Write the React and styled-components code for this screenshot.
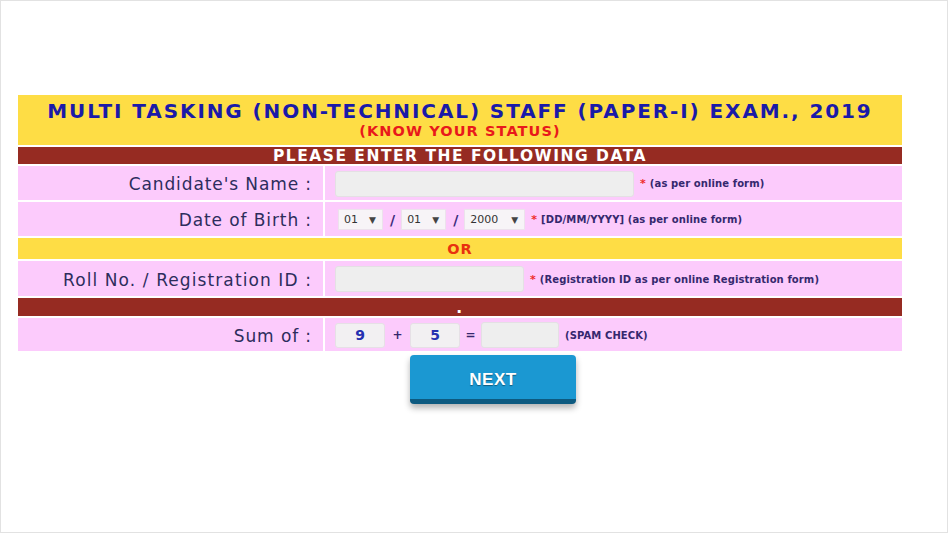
import React from "react";
import styled, { createGlobalStyle } from "styled-components";

const Global = createGlobalStyle`
  html, body {
    margin: 0;
    padding: 0;
    background: #ffffff;
  }
  * {
    box-sizing: border-box;
  }
`;

const Frame = styled.div`
  width: 948px;
  height: 533px;
  border: 1px solid #e2e2e2;
  padding: 94px 0 0 17px;
  font-family: "DejaVu Sans", Verdana, sans-serif;
`;

const Form = styled.div`
  width: 884px;
  display: flex;
  flex-direction: column;
  gap: 2px;
`;

const Header = styled.div`
  height: 50px;
  background: #fedd45;
  display: flex;
  flex-direction: column;
  align-items: center;
  padding-top: 4px;
`;

const Title = styled.div`
  color: #1a1aa8;
  font-weight: bold;
  font-size: 20px;
  line-height: 24px;
  letter-spacing: 1.9px;
`;

const SubTitle = styled.div`
  color: #e8191b;
  font-weight: bold;
  font-size: 14.5px;
  line-height: 16px;
  letter-spacing: 1.1px;
`;

const Band = styled.div`
  height: ${(p) => p.h}px;
  background: ${(p) => (p.yellow ? "#fedd45" : "#962b22")};
  color: ${(p) => (p.yellow ? "#e8310f" : "#ffffff")};
  font-weight: bold;
  font-size: ${(p) => (p.yellow ? "14.5px" : "15.5px")};
  display: flex;
  align-items: center;
  justify-content: center;
  padding-top: 1px;
  letter-spacing: ${(p) => (p.yellow ? "1px" : "1.5px")};
`;

const Row = styled.div`
  height: ${(p) => p.h}px;
  display: grid;
  grid-template-columns: 305px 1fr;
  gap: 2px;
`;

const Label = styled.div`
  background: #fccbfc;
  color: #2d2d5c;
  font-size: 17px;
  letter-spacing: ${(p) => (p.wide ? "1.1px" : "0.9px")};
  display: flex;
  align-items: center;
  justify-content: flex-end;
  padding: 2px 11px 0 0;
`;

const Value = styled.div`
  background: #fccbfc;
  display: flex;
  align-items: center;
  padding: 1px 0 0 10px;
`;

const TextBox = styled.div`
  width: ${(p) => p.w}px;
  height: 26px;
  background: #eeeeee;
  border: 1px solid #e4e0e4;
  border-radius: 3px;
`;

const Note = styled.span`
  color: #35286e;
  font-size: 10px;
  font-weight: bold;
  letter-spacing: 0.1px;
  margin-left: 6px;
  white-space: nowrap;
  b {
    color: #ef2b2b;
    font-size: 11px;
    margin-right: 4px;
  }
`;

const Select = styled.div`
  width: ${(p) => p.w}px;
  height: 21px;
  background: #f7f4f7;
  border: 1px solid #ece2ec;
  color: #333;
  font-size: 11px;
  display: flex;
  align-items: center;
  justify-content: space-between;
  padding: 0 6px 0 5px;
  margin-left: 3px;
  span {
    font-size: 9px;
    color: #444;
  }
`;

const Slash = styled.span`
  color: #3a2a7a;
  font-weight: bold;
  font-size: 14px;
  margin: 0 3px 0 7px;
`;

const NumBox = styled.div`
  width: 50px;
  height: 25px;
  background: #f2f0f2;
  border: 1px solid #e6e0e6;
  border-radius: 3px;
  color: #2530b0;
  font-weight: bold;
  font-size: 14px;
  display: flex;
  align-items: center;
  justify-content: center;
`;

const Op = styled.span`
  color: #35286e;
  font-weight: bold;
  font-size: 12px;
  width: ${(p) => p.w}px;
  text-align: center;
`;

const Footer = styled.div`
  width: 884px;
  display: flex;
  justify-content: center;
  padding: 4px 0 0 66px;
`;

const NextButton = styled.button`
  width: 166px;
  height: 49px;
  background: #1b98d2;
  border: none;
  border-bottom: 5px solid #0d5a80;
  border-radius: 4px;
  box-shadow: 0 4px 6px rgba(0, 0, 0, 0.3);
  color: #ffffff;
  font-family: "Liberation Sans", Arial, sans-serif;
  font-weight: bold;
  font-size: 17px;
  letter-spacing: 0.5px;
  text-shadow: 0 1px 1px rgba(0, 0, 0, 0.4);
  padding: 6px 0 0;
`;

export default function App() {
  return (
    <>
      <Global />
      <Frame>
        <Form>
          <Header>
            <Title>MULTI TASKING (NON-TECHNICAL) STAFF (PAPER-I) EXAM., 2019</Title>
            <SubTitle>(KNOW YOUR STATUS)</SubTitle>
          </Header>
          <Band h={17}>PLEASE ENTER THE FOLLOWING DATA</Band>
          <Row h={34}>
            <Label>Candidate's Name :</Label>
            <Value>
              <TextBox w={299} />
              <Note>
                <b>*</b>(as per online form)
              </Note>
            </Value>
          </Row>
          <Row h={34}>
            <Label>Date of Birth :</Label>
            <Value>
              <Select w={45}>
                01 <span>▼</span>
              </Select>
              <Slash>/</Slash>
              <Select w={45}>
                01 <span>▼</span>
              </Select>
              <Slash>/</Slash>
              <Select w={61}>
                2000 <span>▼</span>
              </Select>
              <Note>
                <b>*</b>[DD/MM/YYYY] (as per online form)
              </Note>
            </Value>
          </Row>
          <Band h={21} yellow>
            OR
          </Band>
          <Row h={35}>
            <Label wide>Roll No. / Registration ID :</Label>
            <Value>
              <TextBox w={189} />
              <Note>
                <b>*</b>(Registration ID as per online Registration form)
              </Note>
            </Value>
          </Row>
          <Band h={18}>.</Band>
          <Row h={33}>
            <Label>Sum of :</Label>
            <Value>
              <NumBox>9</NumBox>
              <Op w={25}>+</Op>
              <NumBox>5</NumBox>
              <Op w={21}>=</Op>
              <TextBox w={78} />
              <Note>(SPAM CHECK)</Note>
            </Value>
          </Row>
        </Form>
        <Footer>
          <NextButton>NEXT</NextButton>
        </Footer>
      </Frame>
    </>
  );
}
